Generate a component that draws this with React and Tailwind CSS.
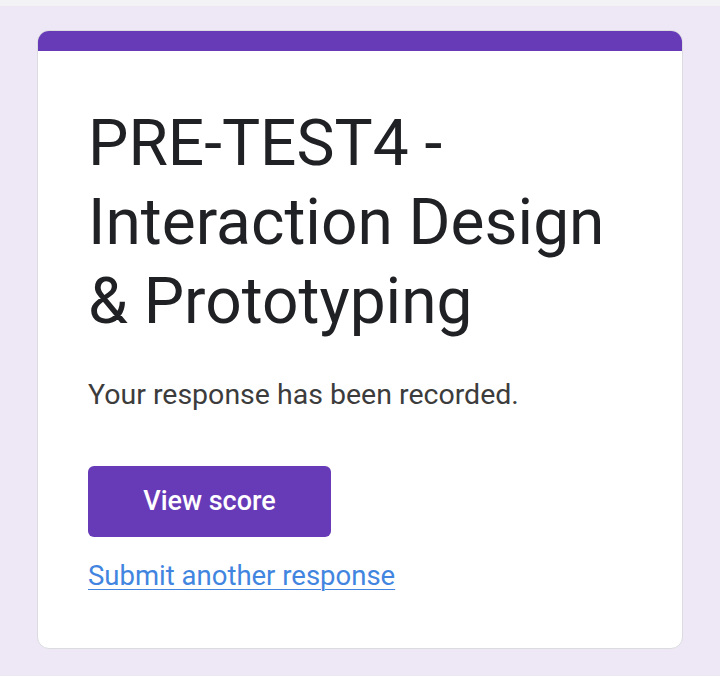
import React from 'react';

export default function App() {
  return (
    <div className="w-[720px] h-[676px] bg-[#ede7f6] flex flex-col" style={{ fontFamily: 'Roboto, "Liberation Sans", sans-serif' }}>
      <div className="h-[6px] bg-[#f3f3f5] shrink-0" />
      <div className="pt-[24px] px-[37px]">
        <div className="w-[646px] rounded-[12px] overflow-hidden border border-[#dadce0] bg-white">
          <div className="h-[20px] bg-[#673ab7]" />
          <div className="pl-[50px] pr-[20px] pt-[53px] pb-[56px]">
            <h1 className="text-[64px] leading-[79px] text-[#202124] font-normal">
              PRE-TEST4 -<br />Interaction Design<br />&amp; Prototyping
            </h1>
            <p className="mt-[38px] text-[28.5px] leading-[32px] text-[#3c3c3c]">
              Your response has been recorded.
            </p>
            <button className="mt-[55px] w-[243px] h-[71px] rounded-[6px] bg-[#673ab7] text-white text-[27px] font-medium">
              View score
            </button>
            <div className="mt-[23px]">
              <a href="#" className="text-[27.5px] leading-[32px] text-[#4285e0] underline underline-offset-[4px] decoration-[1px]">
                Submit another response
              </a>
            </div>
          </div>
        </div>
      </div>
    </div>
  );
}
